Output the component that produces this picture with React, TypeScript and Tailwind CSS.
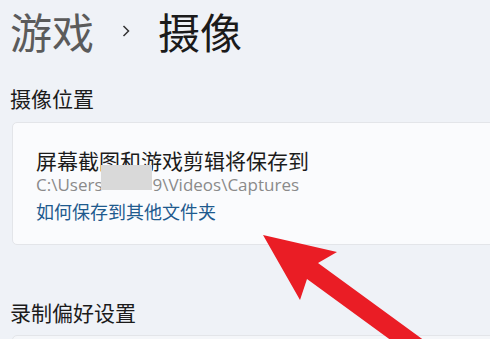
export default function App() {
  return (
    <div
      className="relative h-[339px] w-[490px] overflow-hidden bg-[#eff2f7] pl-[10px]"
      style={{ fontFamily: '"Noto Sans CJK SC", "Noto Sans", sans-serif' }}
    >
      {/* breadcrumb header */}
      <div className="flex h-[61px] items-center text-[42px] leading-[61px]">
        <span className="text-[#5b5b5b]">游戏</span>
        <svg className="ml-[28px] mr-[28px] h-[12px] w-[8px]" viewBox="0 0 8 12">
          <polyline points="1.5,1 6.5,6 1.5,11" fill="none" stroke="#333" strokeWidth="1.5" />
        </svg>
        <span className="text-[#1b1b1b]">摄像</span>
      </div>

      <div className="mt-[23px] text-[21px] leading-[28px] text-[#1b1b1b]">摄像位置</div>

      <div className="ml-[2px] mt-[10px] w-[500px] rounded-[5px] border border-[#e3e5e9] bg-[#fafbfd] pl-[23px] pt-[24px] pb-[20px]">
        <div className="text-[21px] leading-[26px] text-[#1b1b1b]">屏幕截图和游戏剪辑将保存到</div>
        <div
          className="flex text-[17px] leading-[24px] text-[#8a8a8a]"
          style={{ fontFamily: '"Open Sans", "Noto Sans", sans-serif' }}
        >
          <span>C:\Users</span>
          <span className="w-[52px]" />
          <span className="-ml-[2px]">9\Videos\Captures</span>
        </div>
        <div className="mt-[1px] text-[18px] leading-[26px] text-[#1e5a8e]">如何保存到其他文件夹</div>
      </div>

      <div className="mt-[53px] text-[21px] leading-[28px] text-[#1b1b1b]">录制偏好设置</div>

      <div className="ml-[2px] mt-[9px] h-[40px] w-[500px] rounded-[5px] border border-[#e3e5e9] bg-[#f4f6f9]" />

      {/* redaction box */}
      <div className="absolute left-[101px] top-[165px] h-[25px] w-[51px] bg-[#d9d9d9]" />

      {/* red arrow */}
      <svg className="absolute left-0 top-0 h-[339px] w-[490px]" viewBox="0 0 490 339">
        <polygon
          points="263,235 337,252 318,263 451,360 418,360 307,279 300,300"
          fill="#ea1d25"
        />
      </svg>
    </div>
  );
}
